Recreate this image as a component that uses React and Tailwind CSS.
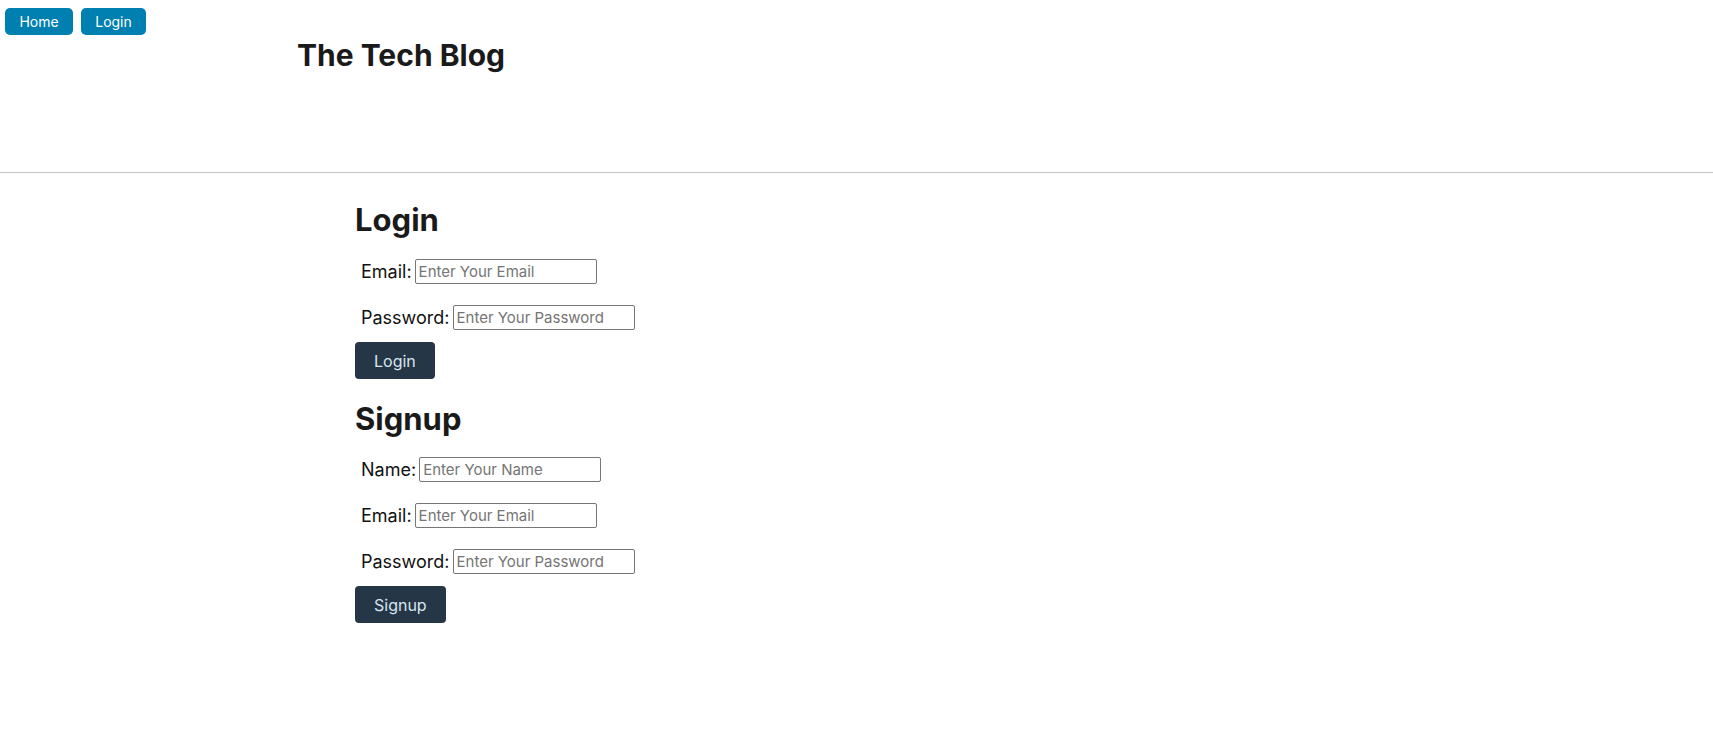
export default function App() {
  const inputClass =
    'w-[182px] h-[25px] border border-[#767676] rounded-[2px] px-[3px] text-[15px] text-[#222] placeholder:text-[#757575] outline-none'

  const Field = ({ label, placeholder, type = 'text' }) => (
    <div className="flex items-center h-[25px] pl-[6px]">
      <label className="text-[18px] text-[#111] mr-[3px]">{label}</label>
      <input type={type} placeholder={placeholder} className={inputClass} />
    </div>
  )

  return (
    <div className="min-h-screen bg-white font-['Inter',sans-serif]">
      <header className="h-[173px] border-b border-[#c4c4c4]">
        <nav className="flex gap-[8px] pt-[8px] pl-[5px]">
          <button className="h-[27px] w-[68px] rounded-[5px] bg-[#007fb1] text-white text-[14px]">Home</button>
          <button className="h-[27px] w-[65px] rounded-[5px] bg-[#007fb1] text-white text-[14px]">Login</button>
        </nav>
        <h1 className="ml-[297px] mt-[2px] text-[30px] font-bold leading-[36px] text-[#1a1a1a]">The Tech Blog</h1>
      </header>

      <main className="pl-[355px] pt-[26px]">
        <section>
          <h2 className="text-[31px] font-bold leading-[41px] text-[#1a1a1a]">Login</h2>
          <form className="mt-[19px]" onSubmit={(e) => e.preventDefault()}>
            <div className="flex flex-col gap-[21px]">
              <Field label="Email:" placeholder="Enter Your Email" type="email" />
              <Field label="Password:" placeholder="Enter Your Password" type="password" />
            </div>
            <button className="mt-[12px] h-[37px] px-[19px] rounded-[4px] bg-[#253647] text-[#d6e6ee] text-[16px]">
              Login
            </button>
          </form>
        </section>

        <section className="mt-[19px]">
          <h2 className="text-[31px] font-bold leading-[41px] text-[#1a1a1a]">Signup</h2>
          <form className="mt-[18px]" onSubmit={(e) => e.preventDefault()}>
            <div className="flex flex-col gap-[21px]">
              <Field label="Name:" placeholder="Enter Your Name" />
              <Field label="Email:" placeholder="Enter Your Email" type="email" />
              <Field label="Password:" placeholder="Enter Your Password" type="password" />
            </div>
            <button className="mt-[12px] h-[37px] px-[19px] rounded-[4px] bg-[#253647] text-[#d6e6ee] text-[16px]">
              Signup
            </button>
          </form>
        </section>
      </main>
    </div>
  )
}
